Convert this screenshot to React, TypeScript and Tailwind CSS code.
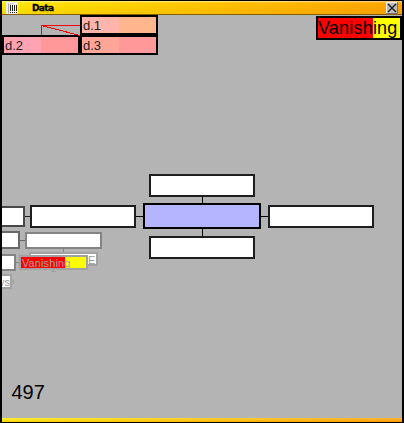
const nodes = [
  "left-[-30px] top-[191px] w-[53px] h-[21px] border-[#484848] bg-white",
  "left-[28px] top-[190px] w-[106px] h-[23px] border-[#1c1f1e] bg-white",
  "left-[147px] top-[159px] w-[106px] h-[23px] border-[#1c1f1e] bg-white",
  "left-[141px] top-[188px] w-[118px] h-[26px] border-black bg-[#b4b4ff]",
  "left-[147px] top-[221px] w-[106px] h-[23px] border-[#1c1f1e] bg-white",
  "left-[266px] top-[190px] w-[106px] h-[23px] border-[#1c1f1e] bg-white",
  "left-[-30px] top-[216px] w-[48px] h-[18px] border-[#686868] bg-white",
  "left-[23px] top-[217px] w-[77px] h-[17px] border-[#848484] bg-white",
  "left-[-30px] top-[239px] w-[44px] h-[17px] border-[#848484] bg-white",
];

const cells = [
  { label: "", style: "invisible" },
  { label: "d.1", style: "bg-[linear-gradient(90deg,#ffb4ac_37px,#ffb68c_37px)]" },
  { label: "d.2", style: "bg-[linear-gradient(90deg,#ffa3b3_37px,#ff9999_37px)]" },
  { label: "d.3", style: "bg-[linear-gradient(90deg,#ffa699_37px,#ff9999_37px)]" },
];

function TitleBar() {
  return (
    <header className="flex h-3.5 shrink-0 items-center border-b border-[#806000] bg-[linear-gradient(180deg,rgba(255,255,255,0.6)_0px,rgba(255,255,255,0)_2px,rgba(170,80,0,0.1)_13px),linear-gradient(90deg,#ffe900,#ffa400)] pl-1 pr-1">
      <svg width="12" height="12" viewBox="0 0 12 12" shapeRendering="crispEdges">
        <path fill="#eee" d="M0 0h12v12H0z" />
        <path stroke="#ccc" d="M2.5 1v11M4.5 1v2M6.5 1v2" />
        <path stroke="#222" strokeDasharray="6 1" d="M4.5 3v8M6.5 3v8M8.5 3v8M10.5 3v8" />
        <path stroke="#aaa" d="M2.5 2v9" />
      </svg>
      <span className="ml-[14px] font-['DejaVu_Sans',sans-serif] text-[9px] leading-3 font-bold tracking-[-0.6px] text-black [-webkit-text-stroke:0.3px_black]">
        Data
      </span>
      <button className="mr-0 ml-auto" aria-label="Close">
        <svg className="block" width="12" height="12" viewBox="0 0 12 12" shapeRendering="crispEdges">
          <path fill="#bdbdbd" d="M0 0h12v12H0z" />
          <path fill="none" stroke="#eee" d="M.5 11V.5H11" />
          <path fill="none" stroke="#777" d="M0 11.5h11.5V0" />
          <path fill="none" stroke="#222" strokeWidth="1.5" shapeRendering="auto" d="m2 2 8 8m0-8-8 8" />
        </svg>
      </button>
    </header>
  );
}

function Canvas() {
  return (
    <main className="relative flex-1 overflow-hidden bg-[#b4b4b4]">
      <div className="flex items-start justify-between">
        <div className="grid grid-cols-[78px_78px]">
          {cells.map((cell, i) => (
            <div
              key={i}
              className={`h-5 w-[78px] border-2 border-black pl-px text-[13px] leading-[17px] tracking-[-0.1px] text-[#222] ${cell.style}`}
            >
              {cell.label}
            </div>
          ))}
        </div>
        <div className="mt-px h-[24px] w-[86px] border-2 border-black bg-[linear-gradient(90deg,#ff0000_55px,#ffff00_55px)] text-[18px] leading-[20px] tracking-[0.2px] whitespace-nowrap">
          Vanishing
        </div>
      </div>

      <svg className="absolute inset-0" width="400" height="403" viewBox="2 15 400 403" fill="none" shapeRendering="crispEdges">
        <path stroke="#ff0000" d="M80 25.5H41.5V35M41.5 25.5 80 35.5" />
        <path stroke="#000" d="M136 216.5h7M261 216.5h7M202.5 197v6M202.5 229v7" />
        <path stroke="#1c1f1e" d="M25 216.5h5" />
        <path stroke="#686868" d="M20 240.5h5" />
        <path stroke="#848484" d="M63.5 249v4M16 262.5h4" />
        <path stroke="#a0a0a0" d="M53.5 270v2M51 271.5h5M12 281.5h2M13.5 279v5" />
      </svg>

      {nodes.map((style) => (
        <div key={style} className={`absolute border-2 ${style}`} />
      ))}

      <div className="absolute top-[237px] left-[27px] h-[14px] w-[69px] overflow-hidden border-2 border-[#a2a2a2] bg-white pl-[57px] text-[11px] leading-[13px] whitespace-nowrap text-[#999]">
        E:
      </div>
      <div className="absolute top-[240px] left-[17px] h-[15px] w-[69px] border-2 border-[#a2a2a2] bg-[linear-gradient(90deg,#ff0000_44px,#ffff00_44px)] pl-px text-[11px] leading-[12px] tracking-[0.1px] text-[#a8a0a0]">
        Vanishing
      </div>
      <div className="absolute top-[259px] left-[-20px] h-[15px] w-[30px] border-2 border-[#a2a2a2] bg-white text-right text-[11px] leading-[12px] text-[#999]">
        ys
      </div>

      <div className="absolute top-[365px] left-[9.5px] text-[20px] leading-6 text-black">497</div>
    </main>
  );
}

export default function App() {
  return (
    <div className="flex h-[423px] w-[404px] flex-col overflow-hidden border-x-2 border-y border-black font-['Liberation_Sans',Arial,sans-serif]">
      <TitleBar />
      <Canvas />
      <footer className="h-1 shrink-0 bg-[linear-gradient(180deg,rgba(255,255,255,0.2),rgba(220,80,0,0.15)),linear-gradient(90deg,#ffed00,#ffa400)]" />
    </div>
  );
}
